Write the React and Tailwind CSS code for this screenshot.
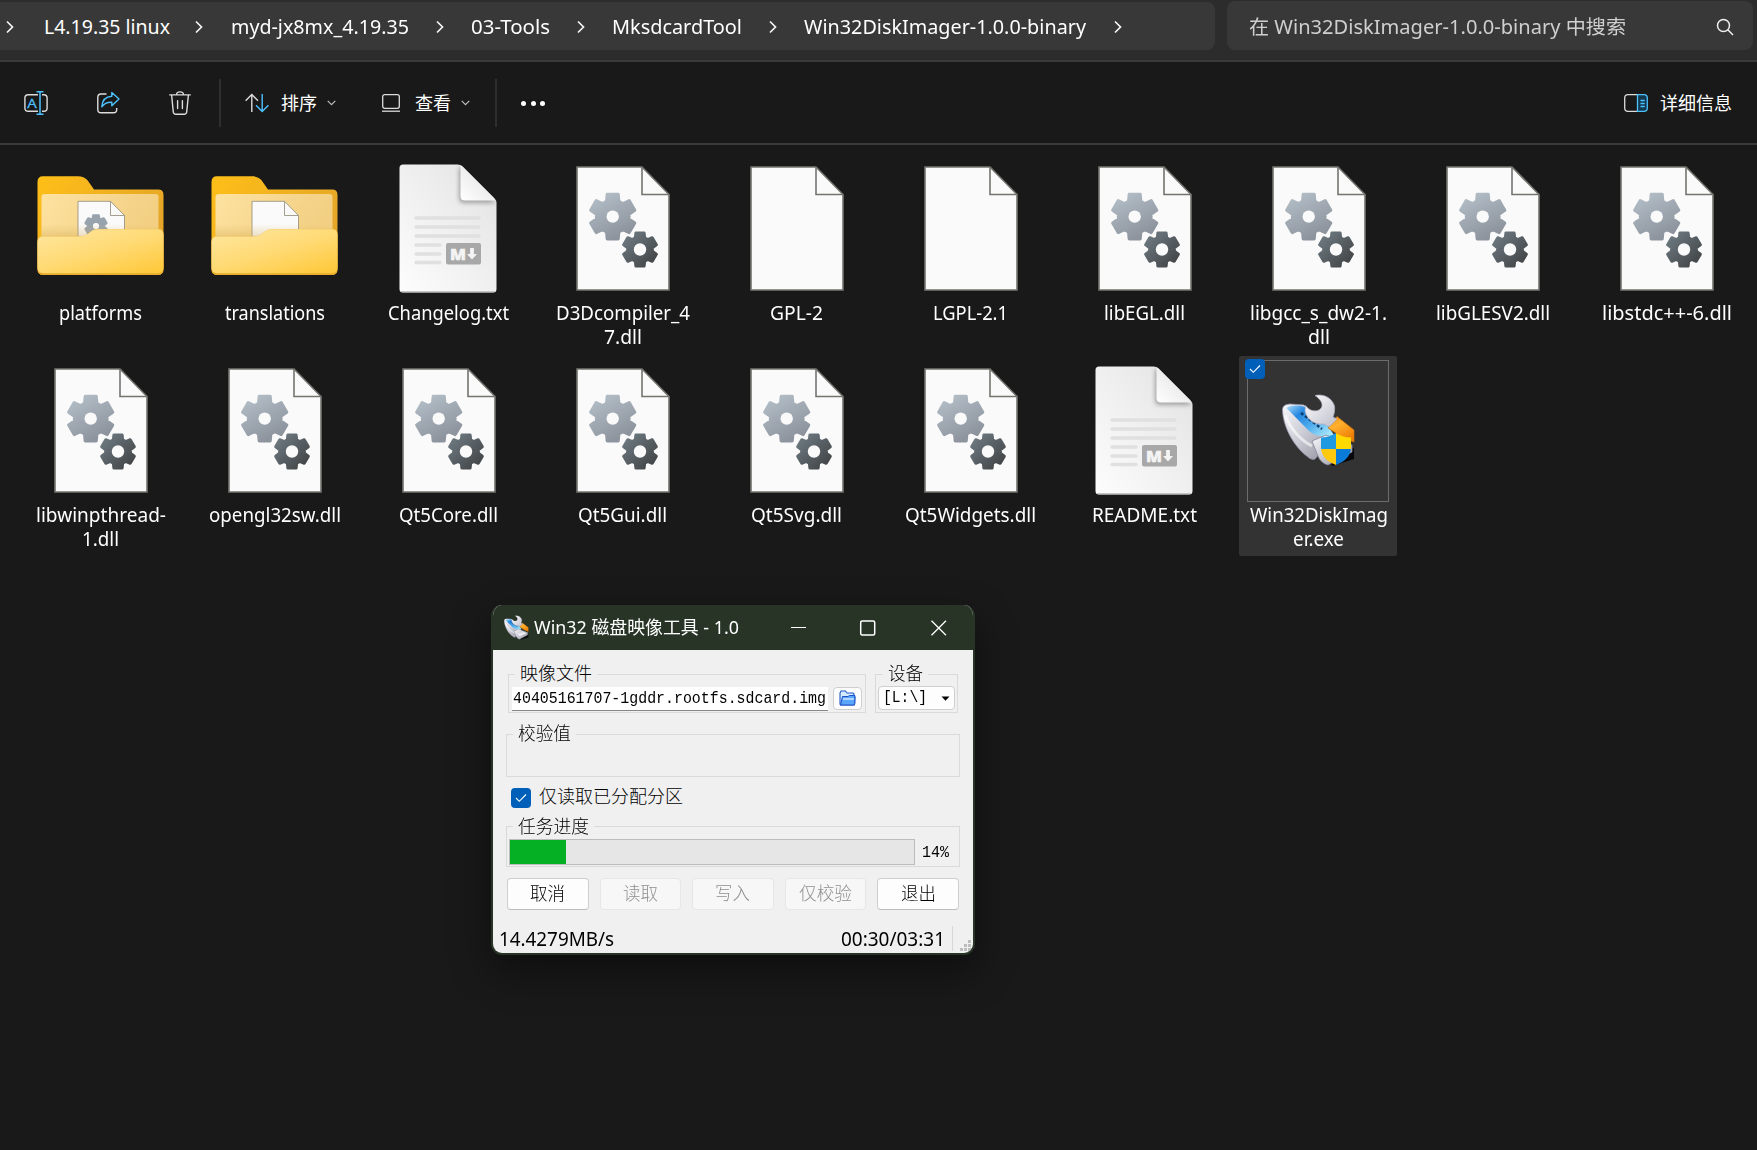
import React, { useLayoutEffect, useRef } from "react";

/* One line of text condensed or widened to an exact width. */
function Fit({ w, children, className = "" }) {
  const ref = useRef(null);
  useLayoutEffect(() => {
    const el = ref.current;
    el.style.transform = "none";
    const natural = el.getBoundingClientRect().width;
    if (natural) el.style.transform = `scaleX(${w / natural})`;
  }, [w, children]);
  return (
    <span className={`inline-flex justify-start shrink-0 ${className}`} style={{ width: w }}>
      <span ref={ref} className="inline-block shrink-0 origin-left whitespace-pre">
        {children}
      </span>
    </span>
  );
}

function gearPath(cx, cy, rOut, rIn) {
  const pts = [];
  const rad = Math.PI / 180;
  for (let i = 0; i < 6; i++) {
    const a = i * 60 - 90;
    [
      [-22, rIn],
      [-14, rOut],
      [14, rOut],
      [22, rIn],
    ].forEach(([d, r]) => {
      pts.push(`${(cx + r * Math.cos((a + d) * rad)).toFixed(2)} ${(cy + r * Math.sin((a + d) * rad)).toFixed(2)}`);
    });
  }
  return `M${pts.join("L")}Z`;
}

function Gear({ cx, cy, rOut, rIn, hole, fill }) {
  return (
    <g>
      <path d={gearPath(cx, cy, rOut - 1.5, rIn - 1)} fill={fill} stroke={fill} strokeWidth="3" strokeLinejoin="round" />
      <circle cx={cx} cy={cy} r={hole} fill="#fafafa" />
    </g>
  );
}

function DocIcon({ gears }) {
  return (
    <svg className="mb-px ml-px" width="94" height="125" viewBox="0 0 94 125">
      <defs>
        <linearGradient id="gearLight" x1="0" y1="0" x2="0.5" y2="1">
          <stop offset="0" stopColor="#b6c1ca" />
          <stop offset="1" stopColor="#8d949e" />
        </linearGradient>
        <linearGradient id="gearDark" x1="0" y1="0" x2="1" y2="1">
          <stop offset="0.1" stopColor="#6b777e" />
          <stop offset="1" stopColor="#3f4143" />
        </linearGradient>
      </defs>
      <path d="M1 1H66L93 28.5V124H1Z" fill="#fafafa" stroke="#74746f" strokeWidth="1.6" />
      <path d="M66 1V28.5H93" fill="none" stroke="#74746f" strokeWidth="1.6" />
      {gears && (
        <>
          <Gear cx={36.7} cy={50.6} rOut={24.5} rIn={17.5} hole={6.2} fill="url(#gearLight)" />
          <Gear cx={64} cy={83.5} rOut={18.5} rIn={13.5} hole={6.2} fill="url(#gearDark)" />
        </>
      )}
    </svg>
  );
}

function FolderIcon({ gear }) {
  return (
    <svg className="mb-[7px]" width="127" height="100" viewBox="0 0 127 100">
      <defs>
        <linearGradient id="fBack" x1="0" y1="0" x2="1" y2="0.6">
          <stop offset="0" stopColor="#ffbf17" />
          <stop offset="1" stopColor="#e3a42a" />
        </linearGradient>
        <linearGradient id="fPaper" x1="0" y1="0" x2="1" y2="0.3">
          <stop offset="0" stopColor="#fde2a0" />
          <stop offset="1" stopColor="#f2cf82" />
        </linearGradient>
        <linearGradient id="fFront" x1="0.1" y1="0" x2="0.9" y2="1">
          <stop offset="0" stopColor="#ffe69d" />
          <stop offset="0.5" stopColor="#ffda74" />
          <stop offset="1" stopColor="#fec93c" />
        </linearGradient>
        <linearGradient id="fShade" x1="0" y1="0" x2="0" y2="1">
          <stop offset="0" stopColor="#d9b45e" stopOpacity="0" />
          <stop offset="1" stopColor="#c99f45" stopOpacity="0.45" />
        </linearGradient>
      </defs>
      <path
        d="M6 0.3H41C45 0.3 48 1.5 50.500 4.200L57 13.600H121Q126.500 13.600 126.500 19V93Q126.500 99 120.500 99H6.500Q0.500 99 0.500 93V6Q0.500 0.300 6 0.300Z"
        fill="url(#fBack)"
      />
      <path d="M8 18H118.500Q121.500 18 121.500 21V70H4.500V21Q4.500 18 8 18Z" fill="url(#fPaper)" />
      <path d="M41 25.300H73.500L87.500 39.500V70H41Z" fill="#fafafa" stroke="#9a9485" strokeWidth="0.9" />
      <path d="M73.500 25.300V39.500H87.500" fill="none" stroke="#9a9485" strokeWidth="0.9" />
      {gear && <Gear cx={59} cy={50} rOut={12} rIn={8.6} hole={3.1} fill="#98a3ae" />}
      <rect x="4.500" y="48" width="117" height="16" fill="url(#fShade)" />
      <path
        d="M6 60.500H43C47 60.500 49 59.500 51.500 57.500L54 55.500C56 54 58 53.300 61 53.300H121Q126.500 53.300 126.500 58.500V93Q126.500 99 120.500 99H6.500Q0.500 99 0.500 93V66Q0.500 60.500 6 60.500Z"
        fill="#e8ab2c"
      />
      <path
        d="M6 60.500H43C47 60.500 49 59.500 51.500 57.500L54 55.500C56 54 58 53.300 61 53.300H121Q126.500 53.300 126.500 58.500V91.500Q126.500 97.200 120.500 97.200H6.500Q0.500 97.200 0.500 91.500V66Q0.500 60.500 6 60.500Z"
        fill="url(#fFront)"
      />
    </svg>
  );
}

function MarkdownIcon() {
  return (
    <svg width="98" height="131" viewBox="0 0 98 131">
      <defs>
        <linearGradient id="mdPage" x1="1" y1="0" x2="0" y2="1">
          <stop offset="0" stopColor="#e2e2e2" />
          <stop offset="1" stopColor="#fdfdfd" />
        </linearGradient>
        <linearGradient id="mdFold" x1="0" y1="1" x2="0.8" y2="0.2">
          <stop offset="0" stopColor="#ffffff" />
          <stop offset="1" stopColor="#e2e2e2" />
        </linearGradient>
        <filter id="mdBlur" x="-30%" y="-30%" width="160%" height="160%">
          <feGaussianBlur stdDeviation="2.2" />
        </filter>
        <clipPath id="mdClip">
          <path d="M4 0.500H58.500Q61.500 0.500 63.500 2.500L95 34Q97.500 36.500 97.500 39V125Q97.500 128.500 94 128.500H4Q0.500 128.500 0.500 125V4Q0.500 0.500 4 0.500Z" />
        </clipPath>
      </defs>
      <g clipPath="url(#mdClip)">
        <rect width="98" height="129" fill="url(#mdPage)" />
        <path d="M60 3V34Q60 39 65 39H97L90 32L64 4Z" fill="#8a8a8a" opacity="0.75" filter="url(#mdBlur)" />
        <path d="M61.500 0V32Q61.500 36.500 66 36.500H98V36L62 0Z" fill="url(#mdFold)" />
        <path d="M0.500 127.800H97.500" stroke="#c4c4c4" strokeWidth="1.400" />
      </g>
      <g stroke="#e0e0e0" strokeWidth="3.400" strokeLinecap="round">
        <path d="M17 54H80M17 63H80M17 72H80M17 81H41M17 90H41M17 98.500H41" />
      </g>
      <rect x="47" y="79" width="35" height="21.500" rx="2" fill="#a8a8a8" />
      <text x="51" y="95.600" fontFamily="'Open Sans', sans-serif" fontSize="16.500" fontWeight="800" fill="#f4f4f4" stroke="#f4f4f4" strokeWidth="0.500" textLength="16" lengthAdjust="spacingAndGlyphs">
        M
      </text>
      <path d="M71.100 84H74.900V90H78L73 95.600L68 90H71.100Z" fill="#f4f4f4" />
    </svg>
  );
}

function ImagerIcon({ size, shield }) {
  return (
    <svg className={shield ? "mb-[2px] ml-px" : ""} width={size} height={size} viewBox="0 0 74 74">
      <defs>
        <linearGradient id="imSide" x1="0" y1="0" x2="1" y2="1">
          <stop offset="0" stopColor="#f7f7fb" />
          <stop offset="0.5" stopColor="#c9c9d3" />
          <stop offset="1" stopColor="#8f8f9c" />
        </linearGradient>
        <linearGradient id="imTop" x1="0" y1="0" x2="1" y2="0.8">
          <stop offset="0" stopColor="#a9dcfa" />
          <stop offset="0.3" stopColor="#2486df" />
          <stop offset="0.6" stopColor="#4ba9ec" />
          <stop offset="1" stopColor="#a5e6fb" />
        </linearGradient>
        <linearGradient id="imWrench" x1="0" y1="0" x2="1" y2="1">
          <stop offset="0" stopColor="#ffffff" />
          <stop offset="1" stopColor="#bdbdca" />
        </linearGradient>
        <linearGradient id="imHandle" x1="0" y1="0" x2="0.6" y2="1">
          <stop offset="0" stopColor="#f08c12" />
          <stop offset="0.4" stopColor="#ffb02e" />
          <stop offset="1" stopColor="#ee7f06" />
        </linearGradient>
        <clipPath id="imShield">
          <path d="M54 40C49 43 44 44.500 39 44.500V54C39 63 45 68.500 54 72C63 68.500 69 63 69 54V44.500C64 44.500 59 43 54 40Z" />
        </clipPath>
      </defs>
      <path d="M47 64L72 55V66L50 73Z" fill="#08080a" />
      <path d="M0.500 17C0.500 13 3 11.500 8 11L22 12L46 36L50 50L38 60L33 66C31 67 28 66 26 64C12 54 1 34 0.500 17Z" fill="url(#imSide)" stroke="#8f8fa6" strokeWidth="0.800" />
      <path d="M4.500 15C9 12 16 12 23 14L46 33L52 42C42 45 33 43 27 38Z" fill="url(#imTop)" />
      <path d="M3 22C8 35 18 47 30 53" stroke="#ffffff" strokeWidth="3" fill="none" opacity="0.6" />
      <path d="M19 20L40 36" stroke="#143a66" strokeWidth="2.400" strokeDasharray="3 2" />
      <path d="M30 48L44 42L70 52V59L46 72C42 71 38 68 36 63Z" fill="url(#imSide)" stroke="#85859a" strokeWidth="0.800" />
      <path d="M40 56L58 50L66 54L47 63Z" fill="#f4f4f8" opacity="0.8" />
      <path d="M55 23.500L72 37V49L63 46L46 35Z" fill="url(#imHandle)" stroke="#c56c08" strokeWidth="0.700" />
      <path
        d="M33 2.500C42 0.500 50 5 52.500 13C53 17 52.500 20 51 24L55 26L47 34L42 31C33 32 25 27 23 18L23.500 12.500C27 17.500 32 19 37 17C42 14 41 8 33 2.500Z"
        fill="url(#imWrench)"
        stroke="#a9a9bb"
        strokeWidth="0.700"
      />
      {shield && (
        <g clipPath="url(#imShield)">
          <rect x="38" y="39" width="16" height="17" fill="#1f9ae0" />
          <rect x="54" y="39" width="16" height="17" fill="#ffd900" />
          <rect x="38" y="56" width="16" height="17" fill="#ffc90f" />
          <rect x="54" y="56" width="16" height="17" fill="#0a7bd6" />
        </g>
      )}
    </svg>
  );
}

function Check({ className = "" }) {
  return (
    <span className={`flex size-5 items-center justify-center rounded-[4px] bg-[#005fb8] ${className}`}>
      <svg width="12" height="10" viewBox="0 0 12 10" fill="none" stroke="#fff" strokeWidth="1.1">
        <path d="M1 5L4.300 8.300L11 1.500" />
      </svg>
    </span>
  );
}

function Crumb({ ml, w, children }) {
  return (
    <span className="flex items-center" style={{ marginLeft: ml }}>
      <Fit w={w}>{children}</Fit>
    </span>
  );
}

function Chevron({ ml }) {
  return (
    <svg className="shrink-0" style={{ marginLeft: ml }} width="8" height="14" viewBox="0 0 8 14" fill="none" stroke="#f5f5f5" strokeWidth="1.700">
      <path d="M1 1.500L6.500 7L1 12.500" />
    </svg>
  );
}

function AddressBar() {
  return (
    <header className="flex h-[62px] items-start border-b-2 border-[#3a3a3a] bg-[#2c2c2c] text-[19.500px]">
      <div className="mt-[2px] flex h-12 w-[1215px] items-center rounded-r-lg bg-[#383838] pt-[2px] text-white">
        <Chevron ml={6} />
        <Crumb ml={30} w={126}>L4.19.35 linux</Crumb>
        <Chevron ml={25} />
        <Crumb ml={28} w={178}>myd-jx8mx_4.19.35</Crumb>
        <Chevron ml={27} />
        <Crumb ml={27} w={79}>03-Tools</Crumb>
        <Chevron ml={27} />
        <Crumb ml={27} w={130}>MksdcardTool</Crumb>
        <Chevron ml={27} />
        <Crumb ml={27} w={282}>Win32DiskImager-1.0.0-binary</Crumb>
        <Chevron ml={28} />
      </div>
      <div className="mt-px ml-3 flex h-[49px] w-[526px] items-center justify-between rounded-lg bg-[#383838] pt-[2px] pr-[19px] pl-[22px] text-[#cfcfcf]">
        <Fit w={377}>在 Win32DiskImager-1.0.0-binary 中搜索</Fit>
        <svg width="18" height="18" viewBox="0 0 18 18" fill="none" stroke="#f0f0f0" strokeWidth="1.500">
          <circle cx="7.500" cy="7.500" r="6" />
          <path d="M11.800 11.800L17 17" />
        </svg>
      </div>
    </header>
  );
}

function Caret() {
  return (
    <svg width="9" height="6" viewBox="0 0 9 6" fill="none" stroke="#bdbdbd" strokeWidth="1.200">
      <path d="M0.700 0.900L4.500 4.700L8.300 0.900" />
    </svg>
  );
}

function Toolbar() {
  return (
    <div className="flex h-[83px] items-center border-b-2 border-[#3a3a3a] pt-px pr-[25px] pl-6 text-[18px] text-white">
      <svg width="24" height="24" viewBox="0 0 24 24" fill="none" strokeWidth="1.400">
        <path d="M14 3.700H4.200Q0.900 3.700 0.900 7V17Q0.900 20.300 4.200 20.300H14M18 3.700H19.800Q23.100 3.700 23.100 7V17Q23.100 20.300 19.800 20.300H18" stroke="#dcdcdc" />
        <path d="M12.500 0.800H19.500M16 0.800V23.200M12.500 23.200H19.500" stroke="#4cc2ff" strokeWidth="1.500" />
        <text x="3.300" y="16.800" fontSize="13.500" fontFamily="'Open Sans', sans-serif" fill="#4cc2ff" stroke="#4cc2ff" strokeWidth="0.300" textLength="9.500" lengthAdjust="spacingAndGlyphs">
          A
        </text>
      </svg>
      <svg className="ml-[49px]" width="23" height="24" viewBox="0 0 23 24" fill="none" strokeWidth="1.400" strokeLinejoin="round">
        <path d="M9.500 3H4Q0.800 3 0.800 6.200V18.500Q0.800 21.800 4 21.800H16.500Q19.700 21.800 19.700 18.500V17" stroke="#dcdcdc" />
        <path d="M14.800 1.500L22 8L14.800 14.800V11.200C10 11 7 12.500 4.800 15.800C5.200 10 8.500 5.500 14.800 5.200Z" stroke="#4cc2ff" />
      </svg>
      <svg className="ml-[49px]" width="22" height="24" viewBox="0 0 22 24" fill="none" stroke="#dcdcdc" strokeWidth="1.400" strokeLinecap="round">
        <path d="M0.800 3.900H21.200M7.500 3.900C7.500 -0.100 14.500 -0.100 14.500 3.900M2.600 4L4.300 21Q4.600 23.200 6.800 23.200H15.200Q17.400 23.200 17.700 21L19.400 4M8.600 9.600V17.600M13.400 9.600V17.600" />
      </svg>
      <span className="ml-7 h-12 w-[2px] bg-[#2e2e2e]" />
      <svg className="ml-6" width="24" height="20" viewBox="0 0 24 20" fill="none" strokeWidth="1.400">
        <path d="M6.800 19V1.500M0.600 7.800L6.800 1.500L13 7.800" stroke="#dcdcdc" />
        <path d="M17.200 1V18.500M11 12.200L17.200 18.500L23.400 12.200" stroke="#4cc2ff" />
      </svg>
      <span className="mr-[10px] ml-[12px] pt-px">排序</span>
      <Caret />
      <svg className="ml-[46px]" width="18" height="18" viewBox="0 0 18 18" fill="none" stroke="#dcdcdc" strokeWidth="1.300">
        <rect x="0.700" y="0.700" width="16.600" height="13.600" rx="2" />
        <path d="M0 17.200H18" />
      </svg>
      <span className="mr-[10px] ml-[15px] pt-px">查看</span>
      <Caret />
      <span className="ml-[25px] h-12 w-[2px] bg-[#2e2e2e]" />
      <span className="mt-px ml-6 flex gap-[4.500px]">
        <i className="size-[5px] rounded-full bg-white" />
        <i className="size-[5px] rounded-full bg-white" />
        <i className="size-[5px] rounded-full bg-white" />
      </span>
      <svg className="ml-auto" width="24" height="18" viewBox="0 0 24 18" fill="none" strokeWidth="1.300">
        <path d="M13.500 0.700H4Q0.700 0.700 0.700 4V14Q0.700 17.300 4 17.300H13.500" stroke="#dcdcdc" />
        <path d="M13.500 0.700H20Q23.300 0.700 23.300 4V14Q23.300 17.300 20 17.300H13.500Z" fill="#12394f" stroke="#4cc2ff" />
        <path d="M16.500 6.500H20.700M16.500 9.500H20.700M16.500 12.500H20.700" stroke="#4cc2ff" />
      </svg>
      <span className="ml-3 pt-px">详细信息</span>
    </div>
  );
}

const FILES = [
  { kind: "folderGear", lines: [["platforms", 83]] },
  { kind: "folder", lines: [["translations", 100]] },
  { kind: "md", lines: [["Changelog.txt", 121]] },
  { kind: "dll", lines: [["D3Dcompiler_4", 134], ["7.dll", 38]] },
  { kind: "doc", lines: [["GPL-2", 53]] },
  { kind: "doc", lines: [["LGPL-2.1", 75]] },
  { kind: "dll", lines: [["libEGL.dll", 81]] },
  { kind: "dll", lines: [["libgcc_s_dw2-1.", 137], ["dll", 22]] },
  { kind: "dll", lines: [["libGLESV2.dll", 114]] },
  { kind: "dll", lines: [["libstdc++-6.dll", 130]] },
  { kind: "dll", lines: [["libwinpthread-", 130], ["1.dll", 37]] },
  { kind: "dll", lines: [["opengl32sw.dll", 132]] },
  { kind: "dll", lines: [["Qt5Core.dll", 99]] },
  { kind: "dll", lines: [["Qt5Gui.dll", 89]] },
  { kind: "dll", lines: [["Qt5Svg.dll", 91]] },
  { kind: "dll", lines: [["Qt5Widgets.dll", 131]] },
  { kind: "md", lines: [["README.txt", 105]] },
  { kind: "exe", lines: [["Win32DiskImag", 138], ["er.exe", 51]], selected: true },
];

function FileIcon({ kind }) {
  if (kind === "folder" || kind === "folderGear") return <FolderIcon gear={kind === "folderGear"} />;
  if (kind === "md") return <MarkdownIcon />;
  if (kind === "exe") return <ImagerIcon size={74} shield />;
  return <DocIcon gears={kind === "dll"} />;
}

function FileTile({ file }) {
  return (
    <div className={`relative flex h-[200px] w-[158px] flex-col items-center rounded-[2px] pt-1 ${file.selected ? "bg-[#333333]" : ""}`}>
      <div className={`flex size-[142px] items-center justify-center border ${file.selected ? "border-[#6c6c6c]" : "border-transparent"}`}>
        <FileIcon kind={file.kind} />
      </div>
      {file.selected && <Check className="absolute top-[3px] left-[6px]" />}
      <div className="mt-px flex flex-col items-center pl-px text-[19px] leading-6 text-white">
        {file.lines.map(([text, w]) => (
          <Fit key={text} w={w}>{text}</Fit>
        ))}
      </div>
    </div>
  );
}

function Group({ legend, legendW, indent, className = "", children }) {
  return (
    <fieldset className={`min-w-0 border border-[#dadada] ${className}`}>
      <legend className="px-[5px] text-[18px] leading-[18px] font-light" style={{ marginLeft: indent }}>
        <Fit w={legendW} className="-translate-y-px">{legend}</Fit>
      </legend>
      {children}
    </fieldset>
  );
}

function DialogButton({ disabled, w, children }) {
  return (
    <button
      disabled={disabled}
      className={`flex h-8 items-center justify-center rounded-[4px] border text-[18px] font-light ${
        disabled ? "border-[#e6e6e6] bg-[#f7f7f7] text-[#8f8f8f]" : "border-[#cfcfcf] border-b-[#bcbcbc] bg-[#fdfdfd] text-black"
      }`}
    >
      <Fit w={w}>{children}</Fit>
    </button>
  );
}

function ImagerDialog() {
  const progress = 13.8;
  return (
    <section className="absolute top-[605px] left-[491px] flex h-[350px] w-[484px] flex-col overflow-hidden rounded-[11px] border-x-2 border-b-2 border-[#273426] bg-[#f0f0f0] text-black shadow-[0_16px_40px_rgba(0,0,0,0.45)]">
      <div className="flex h-[45px] shrink-0 items-center bg-[#273426] pl-[11px] text-[18px] text-white">
        <ImagerIcon size={25} />
        <Fit w={205} className="ml-[5px]">Win32 磁盘映像工具 - 1.0</Fit>
        <svg className="ml-[52px]" width="156" height="16" viewBox="0 0 156 16" fill="none" stroke="#fff" strokeWidth="1.300">
          <path d="M0 7.500H15" strokeWidth="1" />
          <rect x="69.700" y="0.900" width="14" height="14" rx="1.500" strokeWidth="1.500" />
          <path d="M140.500 0.700L155 15.200M155 0.700L140.500 15.200" />
        </svg>
      </div>

      <div className="mt-[15px] ml-[15px] flex">
        <Group legend="映像文件" legendW={72} indent={6} className="h-12 w-[358px]">
          <div className="mt-1 ml-[3px] flex">
            <div className="flex h-6 w-[316px] items-center justify-end border-b border-[#868686] bg-white pt-px pr-[2px] font-['Liberation_Mono',monospace] text-[17px]">
              <Fit w={313}>40405161707-1gddr.rootfs.sdcard.img</Fit>
            </div>
            <div className="ml-[5px] flex h-[23px] w-[29px] items-center justify-center rounded-[4px] border border-[#cfcfcf] bg-[#fdfdfd]">
              <svg className="mb-px" width="17" height="16" viewBox="0 0 17 16">
                <path d="M1 3L2 1H6.500L8 3H14L15 4V7H16L15.500 15H1.500L1 14Z" fill="#d5ecff" stroke="#2257c8" strokeWidth="1.100" />
                <path d="M3.500 6.500H9L10.500 5.500H15.800V13.500L14.500 15H1.500Z" fill="#5aa6ff" stroke="#1c50c4" strokeWidth="1" />
                <path d="M4 9H15" stroke="#cfe6ff" strokeWidth="1.400" />
              </svg>
            </div>
          </div>
        </Group>
        <Group legend="设备" legendW={35} indent={7} className="ml-[9px] h-12 w-[83px]">
          <div className="mt-[3px] ml-[2px] flex h-6 w-[77px] items-center justify-between rounded-[4px] border border-[#cfcfcf] bg-[#fdfdfd] pr-1 pl-[4px] font-['Liberation_Mono',monospace] text-[17px]">
            <Fit w={44}>[L:\]</Fit>
            <svg width="9" height="5" viewBox="0 0 9 5">
              <path d="M0.500 0.500H8.500L4.500 4.800Z" />
            </svg>
          </div>
        </Group>
      </div>

      <Group legend="校验值" legendW={53} indent={6} className="mt-3 ml-[13px] h-[52px] w-[454px]" />

      <label className="mt-[11px] ml-[18px] flex h-5 items-center gap-2 text-[18px] font-light">
        <Check />
        <Fit w={144} className="-translate-y-px">仅读取已分配分区</Fit>
      </label>

      <Group legend="任务进度" legendW={71} indent={6} className="mt-[10px] ml-[13px] h-[49px] w-[454px]">
        <div className="mt-[3px] ml-[2px] flex h-[26px] items-center">
          <div className="h-[26px] w-[406px] border border-[#bcbcbc] bg-[#e6e6e6]">
            <div className="h-full bg-[#06b025]" style={{ width: `${progress}%` }} />
          </div>
          <Fit w={27} className="ml-[7px] pt-px font-['Liberation_Mono',monospace] text-[17px]">{`${Math.round(progress)}%`}</Fit>
        </div>
      </Group>

      <div className="mt-[11px] ml-[14px] grid w-[452px] grid-cols-5 gap-[11px]">
        <DialogButton w={35}>取消</DialogButton>
        <DialogButton w={35} disabled>读取</DialogButton>
        <DialogButton w={35} disabled>写入</DialogButton>
        <DialogButton w={53} disabled>仅校验</DialogButton>
        <DialogButton w={35}>退出</DialogButton>
      </div>

      <div className="flex flex-1 items-center pt-[15px] pl-[6px] text-[19px]">
        <Fit w={115}>14.4279MB/s</Fit>
        <Fit w={104} className="ml-auto">00:30/03:31</Fit>
        <span className="ml-[7px] h-[25px] w-px bg-[#d7d7d7]" />
        <svg className="mt-auto mb-[2px] ml-[7px]" width="11" height="11" viewBox="0 0 11 11" fill="#bdbdbd">
          <path d="M8 0h3v3h-3zM4 4h3v3h-3zM8 4h3v3h-3zM0 8h3v3h-3zM4 8h3v3h-3zM8 8h3v3h-3z" />
        </svg>
        <span className="w-[2px]" />
      </div>
    </section>
  );
}

export default function App() {
  return (
    <div className="relative h-[1150px] w-[1757px] overflow-hidden bg-[#191919] font-['Noto_Sans','Noto_Sans_CJK_SC',sans-serif]">
      <AddressBar />
      <Toolbar />
      <main className="mt-[9px] ml-[13px] grid w-[1740px] grid-cols-10 justify-items-center gap-y-[2px]">
        {FILES.map((file) => (
          <FileTile key={file.lines[0][0]} file={file} />
        ))}
      </main>
      <ImagerDialog />
    </div>
  );
}
